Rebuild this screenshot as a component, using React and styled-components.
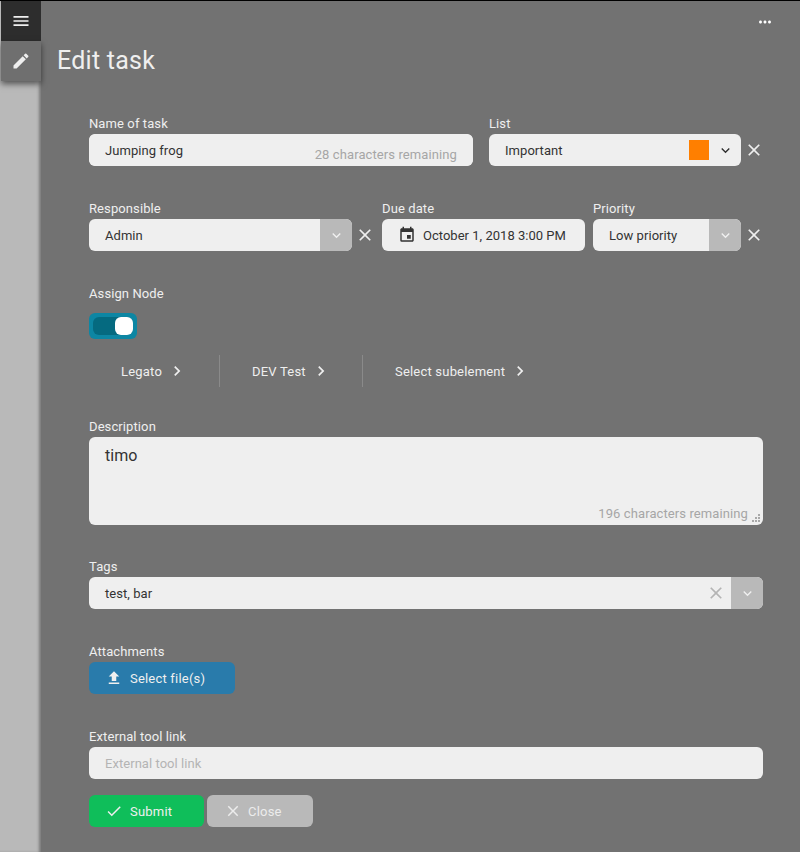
import React from "react";
import styled, { createGlobalStyle } from "styled-components";
import {
  MdMenu,
  MdEdit,
  MdMoreHoriz,
  MdExpandMore,
  MdClose,
  MdChevronRight,
  MdEvent,
  MdFileUpload,
  MdCheck,
} from "react-icons/md";

const GlobalStyle = createGlobalStyle`
  html, body {
    margin: 0;
    padding: 0;
    height: 852px;
    overflow: hidden;
    background: #000;
    font-family: Roboto, "Liberation Sans", sans-serif;
  }
  * {
    box-sizing: border-box;
  }
`;

const Page = styled.div`
  display: flex;
  height: 851px;
  margin-top: 1px;
  background: #727272;
`;

const Rail = styled.div`
  position: relative;
  z-index: 2;
  flex: 0 0 40px;
  background: #b9b9b9;
  box-shadow: inset -3px 0 3px -1px rgba(0, 0, 0, 0.35);
`;

const RailButton = styled.div`
  display: flex;
  align-items: center;
  justify-content: center;
  width: 40px;
  height: 40px;
  margin-left: 1px;
  color: #efefef;
  background: ${({ $active }) => ($active ? "#6f6f6f" : "#2d2d2d")};
  box-shadow: ${({ $active }) =>
    $active ? "0 3px 6px rgba(0, 0, 0, 0.55)" : "none"};
`;

const Main = styled.div`
  flex: 1;
  min-width: 0;
`;

const TopBar = styled.div`
  display: flex;
  justify-content: flex-end;
  height: 43px;
  padding: 12px 26px 0 0;
  color: #fff;
`;

const Title = styled.h1`
  margin: 0 0 0 16px;
  height: 33px;
  font-size: 25px;
  line-height: 33px;
  font-weight: 400;
  letter-spacing: 0.25px;
  color: #efefef;
`;

const Form = styled.div`
  display: flex;
  flex-direction: column;
  padding: 36px 37px 0 48px;
`;

const Row = styled.div`
  display: flex;
  margin-bottom: 32px;
`;

const Field = styled.div`
  flex: ${({ $width }) => ($width ? `0 0 ${$width}px` : "none")};
  margin-top: ${({ $top }) => $top || 0}px;
  margin-right: ${({ $after }) => $after || 0}px;
`;

const Label = styled.div`
  height: 21px;
  font-size: 13px;
  line-height: 22px;
  font-weight: 400;
  letter-spacing: 0.1px;
  color: #efefef;
`;

const Control = styled.div`
  position: relative;
  display: flex;
  align-items: center;
  height: 32px;
  background: #efefef;
  border-radius: 6px;
  overflow: hidden;
  font-size: 13px;
  letter-spacing: 0.05px;
  color: #333;
`;

const Value = styled.span`
  flex: 1;
  padding-left: 16px;
  white-space: nowrap;
`;

const TextInput = styled.input`
  width: 100%;
  height: 32px;
  padding: 0 16px;
  border: 0;
  outline: 0;
  border-radius: 6px;
  background: #efefef;
  color: #333;
  font: 400 13px Roboto, sans-serif;
  letter-spacing: 0.05px;

  &::placeholder {
    color: #b4b4b4;
    opacity: 1;
  }
`;

const Remaining = styled.span`
  position: absolute;
  right: ${({ $area }) => ($area ? 15 : 16)}px;
  bottom: 4px;
  font-size: 13px;
  line-height: 15px;
  letter-spacing: 0.1px;
  color: #a6a6a6;
  pointer-events: none;
`;

const Caret = styled.div`
  display: flex;
  align-items: center;
  justify-content: center;
  flex: 0 0 32px;
  height: 32px;
  background: ${({ $plain }) => ($plain ? "transparent" : "#b9b9b9")};
  color: ${({ $plain }) => ($plain ? "#333" : "#efefef")};
`;

const Swatch = styled.span`
  flex: 0 0 20px;
  height: 20px;
  background: ${({ $color }) => $color};
`;

const ClearButton = styled.div`
  display: flex;
  align-items: center;
  justify-content: center;
  flex: 0 0 26px;
  height: 32px;
  margin: 21px ${({ $after }) => $after || 0}px 0 0;
  color: #efefef;
`;

const InnerClear = styled.div`
  display: flex;
  align-items: center;
  justify-content: center;
  flex: 0 0 20px;
  margin-right: 5px;
  color: #b4b4b4;
`;

const DateControl = styled(Control)`
  padding-left: 16px;
  gap: 7px;
  letter-spacing: 0.02px;
`;

const ToggleBox = styled.div`
  width: 48px;
  height: 26px;
  margin-top: 9px;
  padding: 4px;
  border-radius: 6px;
  background: #0d86a3;
`;

const ToggleTrack = styled.div`
  display: flex;
  justify-content: flex-end;
  width: 40px;
  height: 18px;
  border-radius: 6px;
  background: #056a80;
`;

const ToggleThumb = styled.div`
  width: 18px;
  height: 18px;
  border-radius: 6px;
  background: #fff;
`;

const Crumbs = styled.div`
  display: flex;
  height: 32px;
  margin: 16px 0 29px;
`;

const Crumb = styled.div`
  display: flex;
  align-items: center;
  gap: 5px;
  width: ${({ $width }) => $width}px;
  padding-left: 32px;
  border-right: ${({ $last }) => ($last ? "0" : "1px solid #8a8a8a")};
  font-size: 13px;
  letter-spacing: 0.2px;
  color: #efefef;
`;

const AreaWrap = styled.div`
  position: relative;
  height: 88px;
`;

const TextArea = styled.textarea`
  display: block;
  width: 100%;
  height: 88px;
  padding: 9px 16px;
  border: 0;
  outline: 0;
  border-radius: 6px;
  background: #efefef;
  color: #333;
  font: 400 16px/20px Roboto, sans-serif;
  resize: none;
`;

const Grip = styled.svg`
  position: absolute;
  right: 3px;
  bottom: 3px;
  width: 8px;
  height: 8px;
  fill: #a8a8a8;
`;

const Button = styled.div`
  display: flex;
  align-items: center;
  gap: ${({ $gap }) => $gap || 7}px;
  width: ${({ $width }) => $width}px;
  height: 32px;
  padding-left: ${({ $pad }) => $pad || 16}px;
  border-radius: 6px;
  background: ${({ $color }) => $color};
  color: ${({ $muted }) => ($muted ? "#ececec" : "#efefef")};
  font-size: 13px;
  letter-spacing: 0.2px;
`;

const Actions = styled.div`
  display: flex;
  gap: 3px;
  margin-top: 16px;
`;

const ClearX = ({ after }) => (
  <ClearButton $after={after}>
    <MdClose size={20} />
  </ClearButton>
);

const SelectCaret = ({ plain }) => (
  <Caret $plain={plain}>
    <MdExpandMore size={17} />
  </Caret>
);

const App = () => {
  return (
    <>
      <GlobalStyle />
      <Page>
        <Rail>
          <RailButton>
            <MdMenu size={20} />
          </RailButton>
          <RailButton $active>
            <MdEdit size={20} />
          </RailButton>
        </Rail>
        <Main>
          <TopBar>
            <MdMoreHoriz size={18} />
          </TopBar>
          <Title>Edit task</Title>
          <Form>
            <Row>
              <Field $width={384} $after={16}>
                <Label>Name of task</Label>
                <Control>
                  <TextInput readOnly value="Jumping frog" />
                  <Remaining>28 characters remaining</Remaining>
                </Control>
              </Field>
              <Field $width={252}>
                <Label>List</Label>
                <Control>
                  <Value>Important</Value>
                  <Swatch $color="#ff7f00" />
                  <SelectCaret plain />
                </Control>
              </Field>
              <ClearX />
            </Row>
            <Row>
              <Field $width={263}>
                <Label>Responsible</Label>
                <Control>
                  <Value>Admin</Value>
                  <SelectCaret />
                </Control>
              </Field>
              <ClearX after={4} />
              <Field $width={203} $after={8}>
                <Label>Due date</Label>
                <DateControl>
                  <MdEvent size={18} />
                  October 1, 2018 3:00 PM
                </DateControl>
              </Field>
              <Field $width={148}>
                <Label>Priority</Label>
                <Control>
                  <Value>Low priority</Value>
                  <SelectCaret />
                </Control>
              </Field>
              <ClearX />
            </Row>
            <Label>Assign Node</Label>
            <ToggleBox>
              <ToggleTrack>
                <ToggleThumb />
              </ToggleTrack>
            </ToggleBox>
            <Crumbs>
              <Crumb $width={131}>
                Legato <MdChevronRight size={20} />
              </Crumb>
              <Crumb $width={143}>
                DEV Test <MdChevronRight size={20} />
              </Crumb>
              <Crumb $width={200} $last>
                Select subelement <MdChevronRight size={20} />
              </Crumb>
            </Crumbs>
            <Label>Description</Label>
            <AreaWrap>
              <TextArea readOnly value="timo" />
              <Remaining $area>196 characters remaining</Remaining>
              <Grip viewBox="0 0 8 8">
                <rect x="6" y="0" width="2" height="2" />
                <rect x="3" y="3" width="2" height="2" />
                <rect x="6" y="3" width="2" height="2" />
                <rect x="0" y="6" width="2" height="2" />
                <rect x="3" y="6" width="2" height="2" />
                <rect x="6" y="6" width="2" height="2" />
              </Grip>
            </AreaWrap>
            <Field $top={31}>
              <Label>Tags</Label>
              <Control>
                <Value>test, bar</Value>
                <InnerClear>
                  <MdClose size={20} />
                </InnerClear>
                <SelectCaret />
              </Control>
            </Field>
            <Field $top={32}>
              <Label>Attachments</Label>
              <Button $width={146} $color="#297bab">
                <MdFileUpload size={18} />
                Select file(s)
              </Button>
            </Field>
            <Field $top={32}>
              <Label>External tool link</Label>
              <TextInput readOnly placeholder="External tool link" />
            </Field>
            <Actions>
              <Button $width={115} $color="#0fbe5a">
                <MdCheck size={18} />
                Submit
              </Button>
              <Button $width={106} $color="#b9b9b9" $pad={17} $gap={6} $muted>
                <MdClose size={18} />
                Close
              </Button>
            </Actions>
          </Form>
        </Main>
      </Page>
    </>
  );
};

export default App;
